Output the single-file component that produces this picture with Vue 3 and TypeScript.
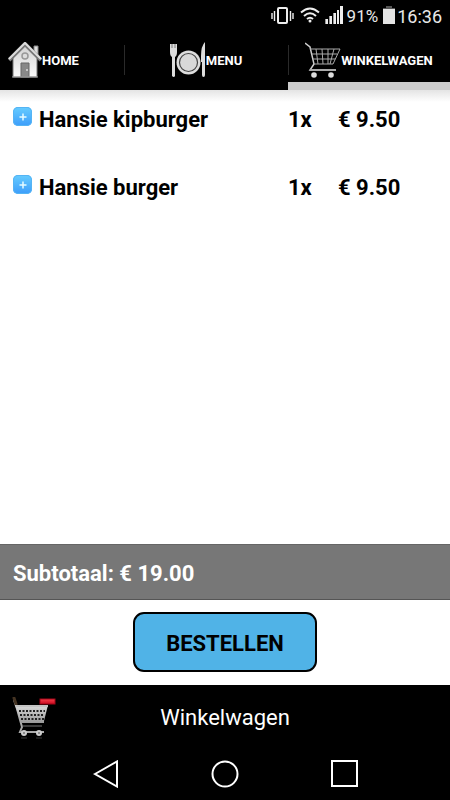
<script setup lang="ts">
import { computed, ref } from 'vue'

interface OrderLine {
  name: string
  quantity: number
  price: number
}

const activeTab = ref('winkelwagen')
const lines = ref<OrderLine[]>([
  { name: 'Hansie kipburger', quantity: 1, price: 9.5 },
  { name: 'Hansie burger', quantity: 1, price: 9.5 },
])

const euro = (value: number): string => `€ ${value.toFixed(2)}`
const subtotal = computed(() =>
  lines.value.reduce((sum, line) => sum + line.quantity * line.price, 0),
)
</script>

<template>
  <div class="app">
    <header class="status">
      <svg class="vibrate" width="24" height="20" viewBox="0 0 24 20" aria-hidden="true">
        <rect x="7" y="2" width="9" height="15" rx="1" fill="none" stroke="#eee" stroke-width="2" />
        <path d="M1 7v6M3.500 5v10M19.500 5v10M22 7v6" stroke="#eee" stroke-width="1.400" />
      </svg>
      <svg class="wifi" width="20" height="20" viewBox="0 0 20 20" aria-hidden="true">
        <path d="M1 6.500Q10 -1.500 19 6.500M4 10Q10 4.500 16 10M7 13Q10 10.500 13 13" fill="none" stroke="#eee" stroke-width="2" />
        <circle cx="10" cy="15" r="1.500" fill="#eee" />
      </svg>
      <svg class="signal" width="18" height="20" viewBox="0 0 18 20" aria-hidden="true">
        <path d="M0 13h3v5H0zM4 10h3v8H4zM8 7h3v11H8zM12 4h2v14h-2z" fill="#999" />
        <path d="M1 13h2v5H1zM5 10h2v8H5zM9 7h2v11H9zM12 4h2v14h-2zM15 0h3v18h-3z" fill="#eee" />
      </svg>
      <span class="percent">91%</span>
      <svg class="battery" width="12" height="20" viewBox="0 0 12 20" aria-hidden="true">
        <path d="M3 0h6v2h3v2H0V2h3z" fill="#555" />
        <path d="M0 3h12v15H0z" fill="#e4e4e4" />
      </svg>
      <span>16:36</span>
    </header>

    <nav class="tabs">
      <button class="tab tab-home" type="button" :class="{ active: activeTab === 'home' }" @click="activeTab = 'home'">
        <svg width="34" height="36" viewBox="0 0 34 36" aria-hidden="true">
          <defs>
            <linearGradient id="wall" x2="0" y2="1">
              <stop stop-color="#d2d2d2" /><stop offset="1" stop-color="#fafafa" />
            </linearGradient>
          </defs>
          <path d="M26 4h4v10h-4z" fill="#ddd" stroke="#888" />
          <path d="M17 3L5 16v19h24V16z" fill="url(#wall)" stroke="#777" />
          <path d="M1 18L17 2l16 16" fill="none" stroke="#777" stroke-width="4" />
          <path d="M1 17L17 1l16 16" fill="none" stroke="#ddd" stroke-width="2" />
          <circle cx="17" cy="14" r="3" fill="#ddd" stroke="#999" stroke-width="1.500" />
          <path d="M13 21h8v14h-8z" fill="#888" stroke="#666" />
          <path d="M4 35h26" stroke="#aaa" />
          <circle cx="19" cy="28" r="1" fill="#ddd" />
        </svg>
        <span>HOME</span>
      </button>
      <button class="tab" type="button" :class="{ active: activeTab === 'menu' }" @click="activeTab = 'menu'">
        <svg width="36" height="36" viewBox="0 0 36 36" aria-hidden="true">
          <circle cx="18.500" cy="20.500" r="12" fill="#ddd" />
          <circle cx="18.500" cy="20.500" r="9" fill="#d8d8d8" stroke="#444" stroke-width="1.200" />
          <path d="M0 2h7v8q0 4-2 5v19q-1 2-3 0V15q-2-1-2-5z" fill="#ddd" />
          <path d="M2 2v4M5 2v4" stroke="#555" stroke-width=".7" />
          <path d="M35 0q-4 4-4 14v6h1v13q0 2 1.500 2t1.500-2z" fill="#ddd" />
        </svg>
        <span>MENU</span>
      </button>
      <button class="tab" type="button" :class="{ active: activeTab === 'winkelwagen' }" @click="activeTab = 'winkelwagen'">
        <svg width="36" height="36" viewBox="0 0 36 36" aria-hidden="true">
          <path d="M0 1l5 4 4 17-4 6h26" fill="none" stroke="#ccc" stroke-width="1.500" />
          <path d="M5 7h30l-7 15H9M7 12h25M8 17h22M11 7l2 15M17 7l1 15M23 7v15M29 7l-4 15" fill="none" stroke="#aaa" />
          <path d="M5 28h26" stroke="#aaa" stroke-width="2" />
          <circle cx="9" cy="33" r="2.800" fill="#ddd" />
          <circle cx="26" cy="33" r="2.800" fill="#ddd" />
        </svg>
        <span>WINKELWAGEN</span>
      </button>
    </nav>

    <main class="list">
      <div v-for="line in lines" :key="line.name" class="line">
        <button class="add" type="button" :aria-label="`${line.name} toevoegen`" @click="line.quantity++">
          <svg width="8" height="8" viewBox="0 0 8 8" aria-hidden="true">
            <path d="M4 .5v7M.5 4h7" stroke="#e6fbff" stroke-width="1.500" />
          </svg>
        </button>
        <span class="name">{{ line.name }}</span>
        <span>{{ line.quantity }}x</span>
        <span>{{ euro(line.price) }}</span>
      </div>
    </main>

    <div class="subtotal">Subtotaal: {{ euro(subtotal) }}</div>
    <div class="checkout">
      <button class="order" type="button">BESTELLEN</button>
    </div>

    <footer class="title-bar">
      <svg class="cart" width="44" height="44" viewBox="0 0 44 44" aria-hidden="true">
        <defs>
          <linearGradient id="metal" x2="0" y2="1">
            <stop stop-color="#ddd" /><stop offset="1" stop-color="#999" />
          </linearGradient>
          <linearGradient id="minus" x2="0" y2="1">
            <stop stop-color="#f8404c" /><stop offset="1" stop-color="#c90a20" />
          </linearGradient>
        </defs>
        <path d="M2 3l3 9 5 18-2 5h24" fill="none" stroke="#aaa" stroke-width="2" />
        <path d="M2 1l2 6" stroke="#432" stroke-width="3" stroke-linecap="round" />
        <path d="M3 8h33l-4 16v2H9z" fill="url(#metal)" />
        <path d="M7 14h26M8 18h24M9 22h23" stroke="#222" stroke-width="2" stroke-dasharray="2 1.500" />
        <path d="M4 9h32" stroke="#c4c4c4" stroke-width="2" />
        <path d="M10 29h20" stroke="#777" />
        <circle cx="12" cy="36" r="3" fill="#ccc" /><circle cx="27" cy="36" r="3" fill="#ccc" />
        <circle cx="12" cy="36" r="1" fill="#777" /><circle cx="27" cy="36" r="1" fill="#777" />
        <path d="M9 41h6M24 41h6" stroke="#1c1c1c" stroke-width="2" />
        <rect x="28" y="2" width="15" height="5" fill="url(#minus)" stroke="#a60719" />
      </svg>
      <h1>Winkelwagen</h1>
    </footer>

    <nav class="system">
      <button type="button" aria-label="Terug">
        <svg width="28" height="28" viewBox="0 0 28 28" aria-hidden="true">
          <path d="M3 14L25 1.500v25z" fill="none" stroke="#fff" stroke-width="2" />
        </svg>
      </button>
      <button type="button" aria-label="Startscherm">
        <svg width="28" height="28" viewBox="0 0 28 28" aria-hidden="true">
          <circle cx="14" cy="14" r="12.500" fill="none" stroke="#fff" stroke-width="2" />
        </svg>
      </button>
      <button type="button" aria-label="Recente apps">
        <svg width="28" height="28" viewBox="0 0 28 28" aria-hidden="true">
          <path d="M2 1h25v25H2z" fill="none" stroke="#fff" stroke-width="2" />
        </svg>
      </button>
    </nav>
  </div>
</template>

<style>
body {
  margin: 0;
}
</style>

<style scoped>
.app {
  display: flex;
  flex-direction: column;
  min-height: 100vh;
  background: #fff;
  color: #000;
  font-family: Roboto, "Liberation Sans", sans-serif;
}

button {
  margin: 0;
  padding: 0;
  border: 0;
  background: none;
  color: inherit;
  font-family: inherit;
  cursor: pointer;
}

svg {
  display: block;
  flex: none;
}

.status {
  display: flex;
  align-items: center;
  justify-content: flex-end;
  height: 32px;
  padding-right: 8px;
  background: #000;
  color: #e8e8e8;
  font-size: 18px;
}

.wifi {
  margin: 0 5px;
}

.percent {
  margin: 0 5px 0 4px;
  font-size: 17px;
}

.battery {
  margin-right: 2px;
}

.tabs {
  display: grid;
  grid-template-columns: 124fr 164fr 162fr;
  height: 58px;
  background: #000;
  color: #fff;
}

.tab {
  position: relative;
  display: flex;
  align-items: center;
  justify-content: center;
  padding-bottom: 2px;
  font-size: 13px;
  font-weight: 700;
}

.tab-home {
  justify-content: flex-start;
  padding-left: 8px;
}

.tab + .tab::before {
  content: "";
  position: absolute;
  top: 13px;
  left: 0;
  width: 1px;
  height: 30px;
  background: #2a2a2a;
}

.tab.active {
  box-shadow: inset 0 -8px #ccc;
}

.list {
  flex: 1;
  background: linear-gradient(#e4e4e4, #fff 12px);
}

.line {
  display: grid;
  grid-template-columns: 19px 1fr 50px 99px;
  align-items: start;
  box-sizing: border-box;
  height: 68px;
  padding: 15px 13px 0;
  font-size: 22px;
  font-weight: 700;
  line-height: 30px;
}

.name {
  padding-left: 7px;
}

.add {
  display: grid;
  place-items: center;
  width: 19px;
  height: 19px;
  margin-top: 2px;
  border-radius: 5px;
  background: linear-gradient(#66ccff, #3d9dfa);
  box-shadow: inset 0 0 0 1px #55b4f4;
}

.subtotal {
  box-sizing: border-box;
  height: 56px;
  padding: 0 13px;
  border-top: 1px solid #666;
  border-bottom: 1px solid #555;
  background: #777;
  color: #fff;
  font-size: 22px;
  font-weight: 700;
  line-height: 58px;
}

.checkout {
  display: flex;
  justify-content: center;
  padding: 12px 0 13px;
}

.order {
  box-sizing: border-box;
  width: 184px;
  height: 60px;
  padding-top: 2px;
  border: 2px solid #000;
  border-radius: 11px;
  background: #50b3e7;
  font-size: 22px;
  font-weight: 700;
}

.title-bar {
  display: grid;
  grid-template-columns: 44px 1fr 44px;
  align-items: center;
  height: 63px;
  padding: 0 12px;
  background: #000;
  color: #fff;
}

.cart {
  margin-top: 4px;
}

h1 {
  margin: 0;
  padding-top: 2px;
  font-size: 22px;
  font-weight: 400;
  line-height: 28px;
  text-align: center;
}

.system {
  display: flex;
  justify-content: center;
  gap: 91px;
  height: 52px;
  background: #000;
}
</style>
